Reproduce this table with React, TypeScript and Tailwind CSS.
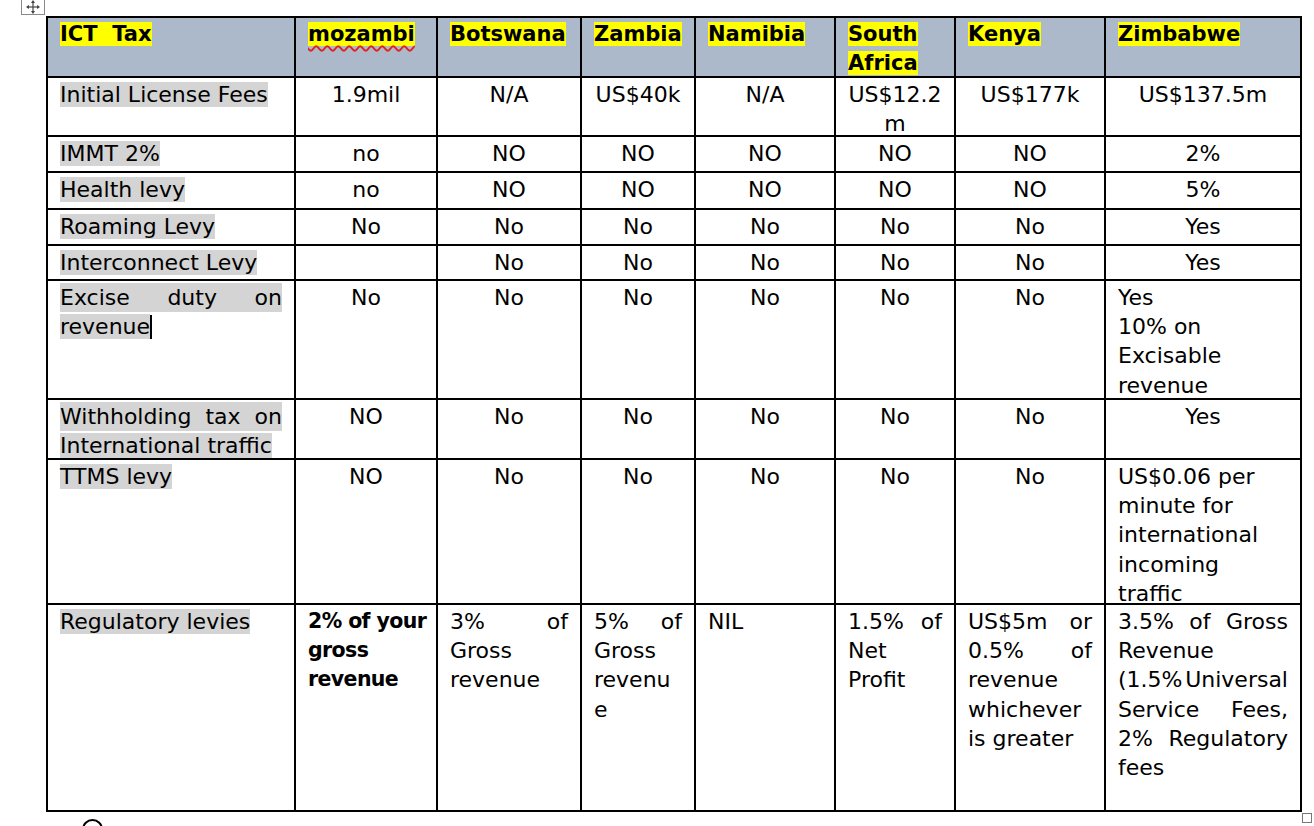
import React from "react";

type Line = string | string[];
type Val = string | { c?: Line[]; l?: Line[]; b?: boolean };

type Row = {
  label: Line[];
  vals: Val[];
  cursor?: boolean;
};

const headers: { lines: string[]; squiggle?: boolean }[] = [
  { lines: ["ICT  Tax"] },
  { lines: ["mozambi"], squiggle: true },
  { lines: ["Botswana"] },
  { lines: ["Zambia"] },
  { lines: ["Namibia"] },
  { lines: ["South", "Africa"] },
  { lines: ["Kenya"] },
  { lines: ["Zimbabwe"] },
];

const rows: Row[] = [
  {
    label: ["Initial License Fees"],
    vals: ["1.9mil", "N/A", "US$40k", "N/A", { c: ["US$12.2", "m"] }, "US$177k", "US$137.5m"],
  },
  { label: ["IMMT 2%"], vals: ["no", "NO", "NO", "NO", "NO", "NO", "2%"] },
  { label: ["Health levy"], vals: ["no", "NO", "NO", "NO", "NO", "NO", "5%"] },
  { label: ["Roaming Levy"], vals: ["No", "No", "No", "No", "No", "No", "Yes"] },
  { label: ["Interconnect Levy"], vals: ["", "No", "No", "No", "No", "No", "Yes"] },
  {
    label: [["Excise", "duty", "on"], "revenue"],
    cursor: true,
    vals: ["No", "No", "No", "No", "No", "No", { l: ["Yes", "10% on", "Excisable", "revenue"] }],
  },
  {
    label: [["Withholding", "tax", "on"], "International traffic"],
    vals: ["NO", "No", "No", "No", "No", "No", "Yes"],
  },
  {
    label: ["TTMS levy"],
    vals: [
      "NO",
      "No",
      "No",
      "No",
      "No",
      "No",
      { l: ["US$0.06 per", "minute for", "international", "incoming", "traffic"] },
    ],
  },
  {
    label: ["Regulatory levies"],
    vals: [
      { l: ["2% of your", "gross", "revenue"], b: true },
      { l: [["3%", "of"], "Gross", "revenue"] },
      { l: [["5%", "of"], "Gross", "revenu", "e"] },
      { l: ["NIL"] },
      { l: [["1.5%", "of"], "Net", "Profit"] },
      { l: [["US$5m", "or"], ["0.5%", "of"], "revenue", "whichever", "is greater"] },
      {
        l: [
          ["3.5%", "of", "Gross"],
          "Revenue",
          ["(1.5%", "Universal"],
          ["Service", "Fees,"],
          ["2%", "Regulatory"],
          "fees",
        ],
      },
    ],
  },
];

const cell = "border-r-2 border-b-2 border-black px-[12px] pt-[2px] whitespace-nowrap";

function TextLine({ line, hl, cursor }: { line: Line; hl?: boolean; cursor?: boolean }) {
  if (Array.isArray(line)) {
    return (
      <div className={`flex justify-between ${hl ? "bg-[#d4d4d4]" : ""}`}>
        {line.map((w, i) => (
          <span key={i}>{w}</span>
        ))}
      </div>
    );
  }
  return (
    <div>
      <span className={hl ? "bg-[#d4d4d4]" : ""}>{line}</span>
      {cursor && <span className="inline-block w-[2px] h-[24px] bg-black align-middle -mt-[2px]" />}
    </div>
  );
}

function ValueCell({ v }: { v: Val }) {
  if (typeof v === "string") {
    return <div className={`${cell} text-center`}>{v}</div>;
  }
  if (v.c) {
    return (
      <div className={`${cell} text-center`}>
        {v.c.map((l, i) => (
          <TextLine key={i} line={l} />
        ))}
      </div>
    );
  }
  return (
    <div className={`${cell} ${v.b ? "font-bold text-[20.5px] tracking-[-0.6px]" : ""}`}>
      {v.l!.map((l, i) => (
        <TextLine key={i} line={l} />
      ))}
    </div>
  );
}

function MoveHandle() {
  return (
    <div className="absolute left-[21px] top-[-4px] w-[24px] h-[19px] border border-[#8a8a8a] bg-white flex items-center justify-center">
      <svg width="16" height="14" viewBox="0 0 16 14" className="mt-[3px]">
        <g stroke="#444" strokeWidth="1.2" fill="none">
          <line x1="2" y1="7" x2="14" y2="7" />
          <line x1="8" y1="1" x2="8" y2="13" />
        </g>
        <g fill="#444">
          <polygon points="1,7 4,5 4,9" />
          <polygon points="15,7 12,5 12,9" />
          <polygon points="8,0 6,3 10,3" />
          <polygon points="8,14 6,11 10,11" />
        </g>
      </svg>
    </div>
  );
}

export default function App() {
  return (
    <div
      className="relative w-[1314px] h-[826px] overflow-hidden bg-white text-black text-[22px] leading-[29.2px]"
      style={{ fontFamily: '"DejaVu Sans", sans-serif' }}
    >
      <MoveHandle />

      <div className="pt-[16px] pl-[46px]">
        <div className="grid w-max grid-cols-[248px_142px_144px_114px_140px_120px_150px_196px] grid-rows-[60px_59px_36px_37px_36px_35px_119px_60px_145px_207px] border-l-2 border-t-2 border-black">
          {/* header */}
          {headers.map((h, i) => (
            <div key={i} className={`${cell} bg-[#acb9ca] font-bold text-[21px]`}>
              {h.lines.map((l, j) => (
                <div key={j}>
                  <span
                    className={`bg-[#ffff00] whitespace-pre ${
                      h.squiggle ? "underline decoration-wavy decoration-[#e02020] decoration-[1.5px] underline-offset-[4px]" : ""
                    }`}
                  >
                    {l}
                  </span>
                </div>
              ))}
            </div>
          ))}

          {/* body */}
          {rows.map((r, ri) => (
            <React.Fragment key={ri}>
              <div className={cell}>
                {r.label.map((l, i) => (
                  <TextLine key={i} line={l} hl cursor={r.cursor && i === r.label.length - 1} />
                ))}
              </div>
              {r.vals.map((v, vi) => (
                <ValueCell key={vi} v={v} />
              ))}
            </React.Fragment>
          ))}
        </div>
      </div>

      {/* resize handle + stray mark under the table */}
      <div className="absolute left-[1302px] top-[813px] w-[10px] h-[10px] border border-[#777] bg-white" />
      <div className="absolute left-[82px] top-[819px] w-[21px] h-[21px] rounded-full border-2 border-black" />
    </div>
  );
}
